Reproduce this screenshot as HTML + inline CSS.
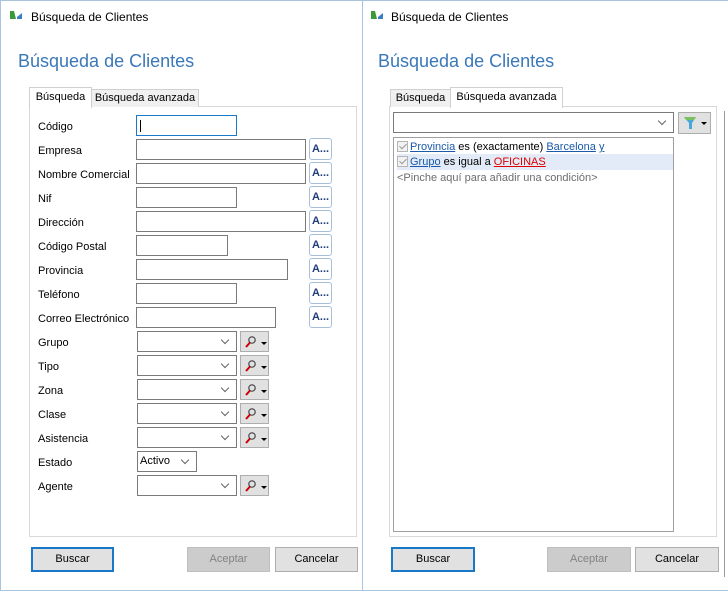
<!DOCTYPE html>
<html><head><meta charset="utf-8"><style>
*{box-sizing:border-box;margin:0;padding:0}
body{width:728px;height:594px;background:#fff;position:relative;overflow:hidden;font-family:"Liberation Sans",sans-serif;font-size:11px;color:#000}
.a{position:absolute}
.win{position:absolute;top:0;height:591px;border:1px solid #a9c4de;background:#fff}
.title{font-size:12px;top:9px}
.h{font-size:18px;color:#3a78b8;top:50px}
.tab{position:absolute;border:1px solid #d0d0d0;border-bottom:none;background:#f0f0f0;font-size:11px;text-align:center;padding-top:3px}
.tab.on{background:#fff;padding-top:3px}
.panel{position:absolute;border:1px solid #d9d9d9;background:#fff}
.lbl{position:absolute;left:37px;font-size:11px;line-height:14px}
.in{position:absolute;border:1px solid #7a7a7a;height:21px;background:#fff}
.ab{position:absolute;width:23px;height:22px;border:1px solid #a8c0dc;border-radius:3px;background:#fff;font-weight:bold;color:#1f3f7a;font-size:11px;text-align:center;line-height:20px}
.cb{position:absolute;border:1px solid #7a7a7a;height:21px;background:#fff}
.cb:after{content:"";position:absolute;right:8px;top:5px;width:5px;height:5px;border-right:1px solid #666;border-bottom:1px solid #666;transform:rotate(45deg)}
.sb{position:absolute;width:29px;height:21px;border:1px solid #adadad;background:#e1e1e1}
.btn{position:absolute;height:25px;border:1px solid #adadad;background:#e1e1e1;font-size:11px;text-align:center;line-height:23px}
.u{text-decoration:underline;color:#1a5aa8}
.chk{display:inline-block;width:11px;height:11px;border:1px solid #b5b5b5;background:#f2f2f2;vertical-align:-2px;margin-right:2px;position:relative}
.chk:after{content:"";position:absolute;left:3px;top:0px;width:3px;height:6px;border-right:1.5px solid #999;border-bottom:1.5px solid #999;transform:rotate(45deg)}
</style></head><body>

<svg width="0" height="0" style="position:absolute"><defs>
<g id="mag"><circle cx="10" cy="6" r="3.2" fill="none" stroke="#444" stroke-width="1.2"/><line x1="8" y1="8.5" x2="4" y2="13" stroke="#c00" stroke-width="2"/><path d="M19 8 L25 8 L22 11 Z" fill="#000"/></g>
<g id="ico"><path d="M2 3 L6 3 L8 11 L2 11 Z" fill="#3a9a3a"/><path d="M9 9 L14 5 L14 11 L9 11 Z" fill="#3a7ec8"/></g>
</defs></svg>

<!-- LEFT WINDOW -->
<div class="win" style="left:0;width:363px">
<svg class="a" style="left:7px;top:7px" width="16" height="14"><use href="#ico"/></svg>
<div class="a title" style="left:30px">Búsqueda de Clientes</div>
<div class="a h" style="left:17px">Búsqueda de Clientes</div>
<div class="panel" style="left:28px;top:105px;width:328px;height:431px"></div>
<div class="tab on" style="left:28px;top:86px;width:63px;height:21px">Búsqueda</div>
<div class="tab" style="left:90px;top:88px;width:108px;height:18px;padding-top:2px">Búsqueda avanzada</div>

<div class="lbl" style="top:119px">Código</div>
<div class="in" style="left:135px;top:114px;width:101px;border-color:#1a78c8"><div class="a" style="left:3px;top:4px;width:1px;height:12px;background:#000"></div></div>
<div class="lbl" style="top:143px">Empresa</div>
<div class="in" style="left:135px;top:138px;width:170px"></div><div class="ab" style="left:308px;top:137px">A...</div>
<div class="lbl" style="top:167px">Nombre Comercial</div>
<div class="in" style="left:135px;top:162px;width:170px"></div><div class="ab" style="left:308px;top:161px">A...</div>
<div class="lbl" style="top:191px">Nif</div>
<div class="in" style="left:135px;top:186px;width:101px"></div><div class="ab" style="left:308px;top:185px">A...</div>
<div class="lbl" style="top:215px">Dirección</div>
<div class="in" style="left:135px;top:210px;width:170px"></div><div class="ab" style="left:308px;top:209px">A...</div>
<div class="lbl" style="top:239px">Código Postal</div>
<div class="in" style="left:135px;top:234px;width:92px"></div><div class="ab" style="left:308px;top:233px">A...</div>
<div class="lbl" style="top:263px">Provincia</div>
<div class="in" style="left:135px;top:258px;width:152px"></div><div class="ab" style="left:308px;top:257px">A...</div>
<div class="lbl" style="top:287px">Teléfono</div>
<div class="in" style="left:135px;top:282px;width:101px"></div><div class="ab" style="left:308px;top:281px">A...</div>
<div class="lbl" style="top:311px">Correo Electrónico</div>
<div class="in" style="left:135px;top:306px;width:140px"></div><div class="ab" style="left:308px;top:305px">A...</div>

<div class="lbl" style="top:335px">Grupo</div>
<div class="cb" style="left:136px;top:330px;width:100px"></div><div class="sb" style="left:239px;top:330px"><svg width="27" height="19"><use href="#mag" transform="translate(1,2)"/></svg></div>
<div class="lbl" style="top:359px">Tipo</div>
<div class="cb" style="left:136px;top:354px;width:100px"></div><div class="sb" style="left:239px;top:354px"><svg width="27" height="19"><use href="#mag" transform="translate(1,2)"/></svg></div>
<div class="lbl" style="top:383px">Zona</div>
<div class="cb" style="left:136px;top:378px;width:100px"></div><div class="sb" style="left:239px;top:378px"><svg width="27" height="19"><use href="#mag" transform="translate(1,2)"/></svg></div>
<div class="lbl" style="top:407px">Clase</div>
<div class="cb" style="left:136px;top:402px;width:100px"></div><div class="sb" style="left:239px;top:402px"><svg width="27" height="19"><use href="#mag" transform="translate(1,2)"/></svg></div>
<div class="lbl" style="top:431px">Asistencia</div>
<div class="cb" style="left:136px;top:426px;width:100px"></div><div class="sb" style="left:239px;top:426px"><svg width="27" height="19"><use href="#mag" transform="translate(1,2)"/></svg></div>
<div class="lbl" style="top:455px">Estado</div>
<div class="cb" style="left:136px;top:450px;width:60px"><span class="a" style="left:2px;top:3px">Activo</span></div>
<div class="lbl" style="top:479px">Agente</div>
<div class="cb" style="left:136px;top:474px;width:100px"></div><div class="sb" style="left:239px;top:474px"><svg width="27" height="19"><use href="#mag" transform="translate(1,2)"/></svg></div>

<div class="btn" style="left:30px;top:546px;width:83px;border:2px solid #1a78c8;line-height:21px">Buscar</div>
<div class="btn" style="left:186px;top:546px;width:83px;background:#ccc;border-color:#bfbfbf;color:#838383">Aceptar</div>
<div class="btn" style="left:274px;top:546px;width:83px">Cancelar</div>
</div>

<!-- RIGHT WINDOW -->
<div class="win" style="left:362px;width:370px">
<svg class="a" style="left:6px;top:7px" width="16" height="14"><use href="#ico"/></svg>
<div class="a title" style="left:28px">Búsqueda de Clientes</div>
<div class="a h" style="left:15px">Búsqueda de Clientes</div>
<div class="panel" style="left:26px;top:105px;width:328px;height:431px"></div>
<div class="tab" style="left:27px;top:88px;width:61px;height:18px;padding-top:2px">Búsqueda</div>
<div class="tab on" style="left:87px;top:86px;width:113px;height:21px">Búsqueda avanzada</div>
<div class="cb" style="left:30px;top:111px;width:281px"></div>
<div class="sb" style="left:315px;top:111px;width:33px;height:22px"><svg width="31" height="20"><path d="M5 4 L17 4 L13 10 L13 16 L10 16 L10 10 Z" fill="#4aa8d8"/><path d="M5 4 L17 4 L15 7 L7 7 Z" fill="#7ac060"/><path d="M22 9 L28 9 L25 12 Z" fill="#000"/></svg></div>
<div class="a" style="left:30px;top:136px;width:281px;height:395px;border:1px solid #a0a0a0"></div>
<div class="a" style="left:34px;top:153px;width:276px;height:16px;background:#e2ebf7"></div>
<div class="a" style="left:34px;top:139px;line-height:14px"><span class="chk"></span><span class="u">Provincia</span> es (exactamente) <span class="u">Barcelona</span> <span class="u">y</span></div>
<div class="a" style="left:34px;top:154px;line-height:14px"><span class="chk"></span><span class="u">Grupo</span> es igual a <span class="u" style="color:#d00">OFICINAS</span></div>
<div class="a" style="left:34px;top:170px;line-height:14px;color:#6d6d6d">&lt;Pinche aquí para añadir una condición&gt;</div>

<div class="a" style="left:361px;top:110px;width:1px;height:466px;background:#999"></div>
<div class="btn" style="left:28px;top:546px;width:84px;border:2px solid #1a78c8;line-height:21px">Buscar</div>
<div class="btn" style="left:184px;top:546px;width:84px;background:#ccc;border-color:#bfbfbf;color:#838383">Aceptar</div>
<div class="btn" style="left:272px;top:546px;width:84px">Cancelar</div>
</div>
</body></html>
